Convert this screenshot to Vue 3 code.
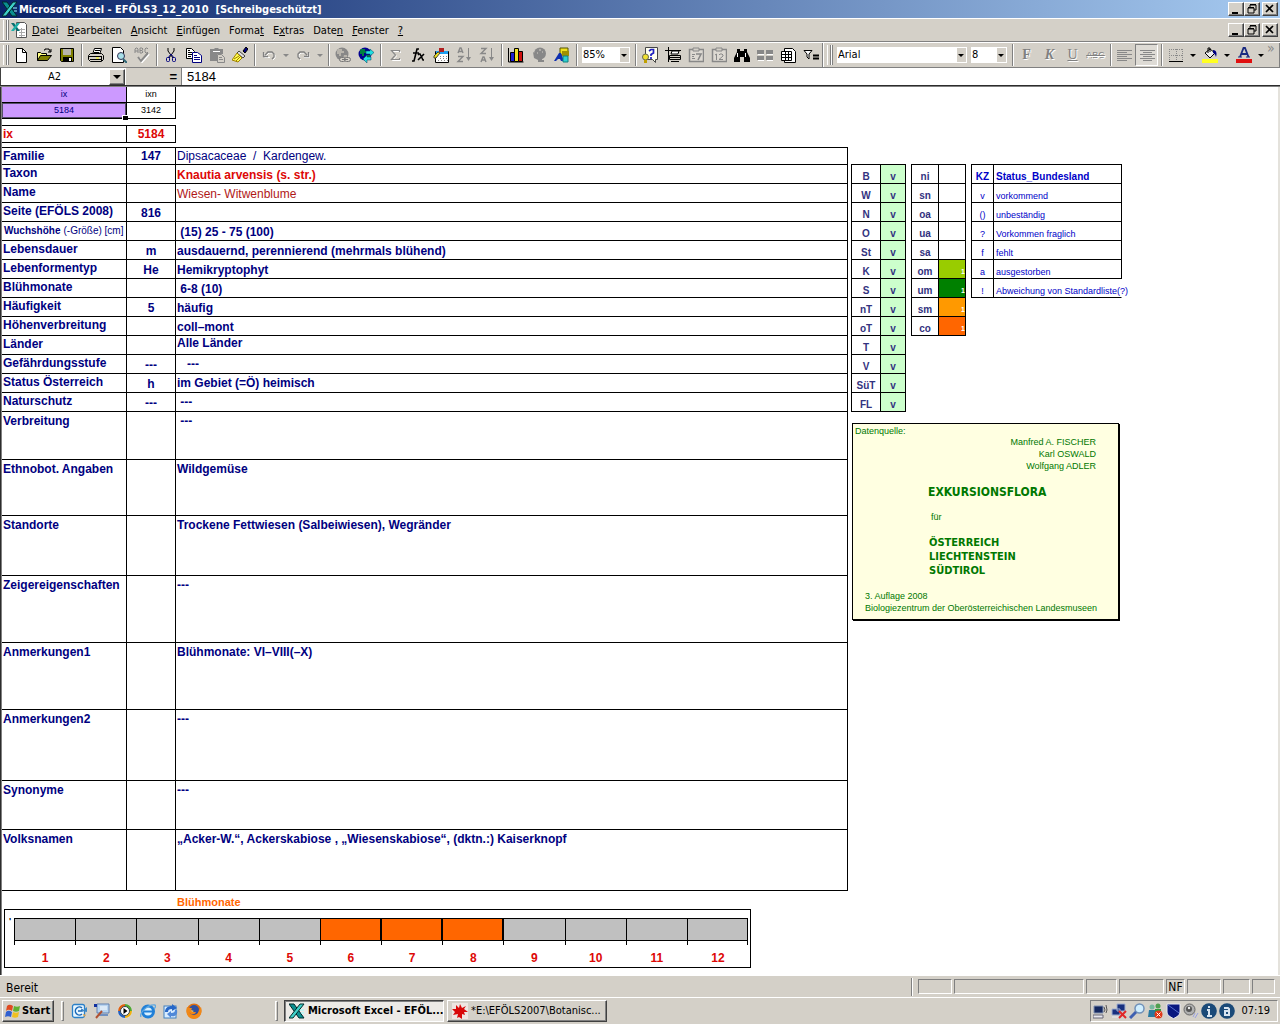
<script setup>
import { ref } from 'vue'

const menus = [
  ['', 'D', 'atei'], ['', 'B', 'earbeiten'], ['', 'A', 'nsicht'], ['', 'E', 'infügen'],
  ['Forma', 't', ''], ['E', 'x', 'tras'], ['Date', 'n', ''], ['', 'F', 'enster'], ['', '?', ''],
]

const standardGroups = [
  ['new', 'open', 'save'],
  ['print', 'preview', 'spell'],
  ['cut', 'copy', 'paste', 'brush'],
  ['undo', 'drop', 'redo', 'drop'],
  ['link', 'web'],
  ['sum', 'fx', 'pivot', 'az', 'za'],
  ['chart', 'map', 'draw'],
]
const extraGroup = ['help', 'printArea', 'cal7', 'cal12', 'find', 'split', 'sheet', 'filter']

const titles = {
  new: 'Neu', open: 'Öffnen', save: 'Speichern', print: 'Drucken', preview: 'Seitenansicht', spell: 'Rechtschreibung',
  cut: 'Ausschneiden', copy: 'Kopieren', paste: 'Einfügen', brush: 'Format übertragen', undo: 'Rückgängig',
  redo: 'Wiederholen', drop: 'Auswahl', link: 'Hyperlink', web: 'Web', sum: 'AutoSumme', fx: 'Funktion',
  pivot: 'PivotTable', az: 'Aufsteigend', za: 'Absteigend', chart: 'Diagramm', map: 'Karte', draw: 'Zeichnen',
  help: 'Hilfe', printArea: 'Druckbereich', cal7: 'Tag', cal12: 'Datum', find: 'Suchen', split: 'Teilen',
  sheet: 'Tabelle', filter: 'Filter', borders: 'Rahmen', fill: 'Füllfarbe', color: 'Schriftfarbe',
  alignLeft: 'Linksbündig', alignCenter: 'Zentriert',
}

const globe = (a, b) => `<circle cx="7" cy="7" r="6.500" fill="${a}"/><path d="M3 2h4v2h2v2H6v3H4V7H2V4zM9 8h3v2l-2 2H8z" fill="${b}"/>`
const icons = {
  new: '<path d="M3.500 1.500h6l4 4v10h-10z" fill="#fff" stroke="#000"/><path d="M9.500 1.500v4h4" fill="none" stroke="#000"/>',
  open: '<path d="M1.500 13.500v-8h3l1 1h5v3" fill="#ffff80" stroke="#000"/><path d="M1.500 13.500l3-5h11l-4 5z" fill="#808000" stroke="#000"/><path d="M8 3h1V2h4v1h1v2M12 5h3M15 2v3" fill="none" stroke="#000"/>',
  save: '<path d="M1.500 1.500h13v13h-12l-1-1z" fill="#808000" stroke="#000"/><path d="M4 2h8v6H4z" fill="#b8b4ac"/><path d="M4 10h9v4H4z" fill="#000"/><path d="M10 11h2v3h-2z" fill="#fff"/>',
  print: '<path d="M4.500 7.500l2-6h7l-2 6z" fill="#fff" stroke="#000"/><path d="M7 3.500h5M6 5.500h5" stroke="#000"/><path d="M.5 8.500l2-2h11l2 2v4l-2 2h-11l-2-2z" fill="#d4d0c8" stroke="#000"/><path d="M1 9.500h12M2 12.500h11M13.500 9v5" stroke="#000"/><path d="M8 10.500h3v1H8z" fill="#ff0"/>',
  preview: '<path d="M1.500 .5h8l3 3v12h-11z" fill="#fff" stroke="#000"/><circle cx="10" cy="9" r="3.500" fill="#a8e0e8" stroke="#335"/><path d="M12 12l4 4" stroke="#306878" stroke-width="2"/>',
  spell: '<g stroke="#fff" fill="none" transform="translate(1 1)"><path d="M4 10l3 4 7-8" stroke-width="2"/></g><g stroke="#888" fill="none"><path d="M1 6V2l1-1h1l1 1v4M1 4h3M6 1v5h2l1-1-1-1.500H6 8L9 2 8 1zM14 2l-1-1h-1l-1 1v3l1 1h1l1-1"/><path d="M4 10l3 4 7-8" stroke-width="2"/></g>',
  cut: '<path d="M5 1v3l5 7M11 1v3l-5 7" fill="none" stroke="#000"/><path d="M8 7l3 4M8 7l-3 4" stroke="#000080"/><rect x="3.500" y="10.500" width="3" height="4" rx="1" fill="none" stroke="#000080"/><rect x="9.500" y="10.500" width="3" height="4" rx="1" fill="none" stroke="#000080"/>',
  copy: '<path d="M.5 1.500h5l3 3v7h-8z" fill="#fff" stroke="#000"/><path d="M2 5.500h4M2 7.500h4M2 3.500h2M2 9.500h3" stroke="#000"/><path d="M6.500 5.500h5l4 3v7h-9z" fill="#fff" stroke="#000080"/><path d="M8 8.500h3M8 10.500h6M8 12.500h6" stroke="#000080"/>',
  paste: '<path d="M1 2h4l1-1h3l1 1h4v5H8v7H1z" fill="#888"/><path d="M4 4.500h7" stroke="#fff"/><path d="M8.500 7.500h4l3 3v5h-7z" fill="#d4d0c8" stroke="#888"/><path d="M10 10.500h3M10 12.500h4" stroke="#888"/>',
  brush: '<path d="M11 4l3-4 2 2-3 4z" fill="#000080" stroke="#000"/><path d="M7 4l6 5-2 2-6-5z" fill="#e0e0e0" stroke="#444"/><path d="M5 6l5 5-4 4-6-2z" fill="#ffff50" stroke="#a08000"/><path d="M2 12l5-3M4 14l4-4" stroke="#a08000"/>',
  undo: '<path d="M3 10V5M3 9.500h5M4 8l3-3h4l2 2v3l-2 2" stroke="#fff" fill="none" transform="translate(1 1)"/><path d="M2.500 10V5M2 9.500h5M4 8l3-3h4l2 2v3l-2 2" stroke="#808080" stroke-width="1.300" fill="none"/>',
  redo: '<path d="M13 10V5M13 9.500H8M12 8L9 5H5L3 7v3l2 2" stroke="#fff" fill="none" transform="translate(1 1)"/><path d="M13.500 10V5M14 9.500H9M12 8L9 5H5L3 7v3l2 2" stroke="#808080" stroke-width="1.300" fill="none"/>',
  link: globe('#888', '#b8b4ac') + '<rect x="4.500" y="10.500" width="6" height="4" rx="2" fill="#d4d0c8" stroke="#777"/><rect x="9.500" y="10.500" width="6" height="4" rx="2" fill="#d4d0c8" stroke="#777"/><path d="M7 12.500h6" stroke="#777"/>',
  web: globe('#000090', '#008040') + '<path d="M8 4h4V2l4 3.500L12 9V7H8z" fill="#20e0e0" stroke="#004060" stroke-width=".5"/><path d="M13 10H9V8l-4 4 4 4v-3h4z" fill="#20e0e0" stroke="#004060" stroke-width=".5"/>',
  sum: '<path d="M12.500 5V3.500h-8l4 4.500-4 4.500h8V11" fill="none" stroke="#fff" transform="translate(1 1)"/><path d="M12.500 5V3.500h-8l4 4.500-4 4.500h8V11" fill="none" stroke="#888" stroke-width="1.200"/>',
  fx: '<path d="M9 2H7L4 14H2M3 6h6M8 8l1-1h1l3 6h1M14 7l-6 6" fill="none" stroke="#000" stroke-width="1.600"/>',
  pivot: '<path d="M2.500 4.500h13v11h-13z" fill="#fff" stroke="#000"/><path d="M3 4h12v3H3z" fill="#20a0f0"/><path d="M7 9.500h8M7 11.500h8M5 13.500h10" stroke="#888" stroke-dasharray="1 2"/><path d="M6 1h5v4H6z" fill="#b02020"/><path d="M1 9l4-4 2 1-4 5H1z" fill="#f0e020" stroke="#443"/>',
  az: '<g fill="none" stroke="#888"><path d="M2 6l2-5h1l2 5M3 4.500h3M2 9.500h5l-5 5h5" stroke-width="1.400"/><path d="M12.500 1v11" stroke-width="1"/></g><path d="M10 10h5l-2.500 4z" fill="#888"/>',
  za: '<g fill="none" stroke="#888"><path d="M2 1.500h5l-5 5h5M2 15l2-5h1l2 5M3 13h3" stroke-width="1.400"/><path d="M12.500 1v11"/></g><path d="M10 10h5l-2.500 4z" fill="#888"/>',
  chart: '<path d="M.5 1v14h15" stroke="#000" fill="none"/><path d="M2.500 5.500h4v9h-4z" fill="#2020d0" stroke="#000"/><path d="M6.500 1.500h4v13h-4z" fill="#f0e020" stroke="#000"/><path d="M10.500 4.500h4v10h-4z" fill="#d01010" stroke="#000"/>',
  map: '<circle cx="9" cy="6.500" r="6" fill="#888"/><path d="M2 5l1 6 4 2v2h6v-2h-2v-2z" fill="#888"/><path d="M8 3h2M11 5h1M6 6h1" stroke="#d4d0c8"/>',
  draw: '<path d="M6 1h8v7H6z" fill="#f0e020" stroke="#555500"/><path d="M8 4h7v5H8z" fill="#a09000"/><path d="M0 14L5 6h2l3 8H7l-1-2H4l-2 2z" fill="#1030b0"/><path d="M9 9h5v6H9z" fill="#30d0d0" stroke="#108080"/>',
  help: '<path d="M3.500 .5h12v12h-2v3l-3-3h-7z" fill="#fffff0" stroke="#444"/><path d="M7 4l2-1.500h2.500V6L9 7.500V9M9 10v2" stroke="#2020c0" stroke-width="1.700" fill="none"/><circle cx="3.500" cy="10" r="3" fill="#f0e030" stroke="#665"/><path d="M2 13h3v3H2z" fill="#c0a000"/>',
  printArea: '<path d="M0 3.500h16M3.500 0v15" stroke="#000"/><path d="M6 7l1-3h7l-1 3z" fill="#fff" stroke="#000"/><path d="M4.500 8.500h11v4h-11z" fill="#d4d0c8" stroke="#000"/><path d="M5 10.500h10M6 14.500h8" stroke="#000"/>',
  cal7: '<path d="M1.500 2.500h14v12h-14z" fill="#ddd9d2" stroke="#888" stroke-width="1.500"/><path d="M5 1h6v3H5zM4 7.500h3M4 9.500h2M4 11.500h3" fill="#d4d0c8" stroke="#888"/><path d="M8 7h5l-3 6" fill="none" stroke="#888" stroke-width="1.600"/>',
  cal12: '<path d="M1.500 2.500h14v12h-14z" fill="#ddd9d2" stroke="#888" stroke-width="1.500"/><path d="M5 1h6v3H5z" fill="#d4d0c8" stroke="#888"/><path d="M4 8l1.500-1v6M8 8l1-1h2l1 1v1l-4 3.500h4" fill="none" stroke="#888"/>',
  find: '<path d="M3 2h3v2h4V2h3v3l3 6v4h-6v-5H6v5H0v-4l3-6z" fill="#000"/><path d="M3.500 6v4M11.500 6v4" stroke="#fff"/>',
  split: '<path d="M0 3h7v4H0zM9 3h7v4H9zM0 9h7v4H0zM9 9h7v4H9z" fill="#888"/><path d="M1 7.500h6M10 7.500h6M1 13.500h6M10 13.500h6" stroke="#fff"/>',
  sheet: '<path d="M4.500 1.500h8l3 3v11H4.500z" fill="#fff" stroke="#000"/><path d="M1.500 4.500h10v9h-10z" fill="#fff" stroke="#000"/><path d="M2 7.500h9M2 10.500h9M5.500 5v8M8.500 5v8" stroke="#000"/>',
  filter: '<path d="M1 3.500h8L6 7v5L4 10V7z" fill="#fff" stroke="#000"/><path d="M10 8.500h6M10 11.500h6" stroke="#000" stroke-width="2"/>',
  borders: '<path d="M1.500 2v12M8.500 2v12M14.500 2v12M1 2.500h14M1 8.500h14" stroke="#888" stroke-dasharray="1 1" fill="none"/><path d="M1 14.500h14" stroke="#000"/>',
  fill: '<path d="M3 6l5-4 5 4-5 5z" fill="#eee" stroke="#000"/><path d="M6 6V1h2v4" stroke="#000" fill="none"/><path d="M11 3c4 0 4 4 3 7-1-3-2-4-3-4z" fill="#000080"/><path d="M0 12h16v4H0z" fill="#ff2"/>',
  color: '<path d="M4 10L7.500 1h1.500l3.500 9M5 7h6" stroke="#1a2a80" stroke-width="1.800" fill="none"/><path d="M2 10h4M10 10h4" stroke="#1a2a80"/><path d="M0 12h16v4H0z" fill="#e01010"/>',
  alignLeft: '<path d="M1 3.500h15M1 5.500h10M1 7.500h15M1 9.500h10M1 11.500h15M1 13.500h10" stroke="#888"/>',
  alignCenter: '<path d="M1 3.500h15M4 5.500h9M1 7.500h15M4 9.500h9M1 11.500h15M4 13.500h9" stroke="#888"/>',
  excel: '<path d="M0 1h5l10 14h-5z" fill="#0a8f90" stroke="#002b2b"/><path d="M15 1h-4L0 15h4z" fill="#40d0c8" stroke="#002b2b"/><path d="M11 7h4M12 10h3" stroke="#9ff"/>',
  book: '<path d="M5.500 .5h8l2 2v13h-10z" fill="#fff" stroke="#555"/><path d="M8 7.500h6M8 10.500h6M8 13.500h6M10.500 6v9" stroke="#aaa"/><path d="M0 1h3l6 8H6z" fill="#0a6f70"/><path d="M9 1H6L0 9h3z" fill="#20b0a8"/>',
  windows: '<path d="M2 3c2-2 4-1 6 0L7 8C5 7 3 6 1 8z" fill="#e04a20"/><path d="M9 3c2 1 4 1 6 0l-1 5c-2 1-4 1-6 0z" fill="#60b030"/><path d="M1 9c2-2 4-1 6 0l-1 5c-2-1-4-1-6 0z" fill="#3060d0"/><path d="M8 9c2 1 4 1 6 0l-1 5c-2 1-4 1-6 0z" fill="#f0c020"/>',
  outlook: '<rect x="1.500" y="1.500" width="12" height="13" rx="2" fill="#e8f6ff" stroke="#2a80c8" stroke-width="1.300"/><path d="M11 5a4 4 0 1 0 0 6M7 8h4V6" fill="none" stroke="#1868b8" stroke-width="1.500"/><path d="M11 8l5-4v5z" fill="#3a88c8"/><path d="M12 11l3 1-2 2z" fill="#e0a040"/>',
  desktop: '<path d="M3 1h12v9H3z" fill="#b8d4f0" stroke="#6080b0"/><path d="M6 4h7M6 6h7" stroke="#fff"/><path d="M4 11h10v2H4z" fill="#7090c0"/><path d="M0 1h3v3H0z" fill="#1030a0"/><path d="M8 8l-6 7" stroke="#b05030" stroke-width="2"/>',
  media: '<circle cx="8" cy="8" r="7.500" fill="#e0e0e0"/><path d="M8 1a7 7 0 0 1 7 7h-4L8 5z" fill="#50a830"/><path d="M1 8a7 7 0 0 1 7-7v4L5 8z" fill="#e06010"/><path d="M1 8a7 7 0 0 0 7 7v-4L5 8z" fill="#2060c0"/><path d="M15 8a7 7 0 0 1-7 7v-4l3-3z" fill="#f0b010"/><circle cx="8" cy="8" r="4.500" fill="#fff" stroke="#345"/><path d="M6.500 5l4 3-4 3z" fill="#000"/>',
  ie: '<circle cx="8" cy="8.500" r="5.500" fill="#d8f0ff" stroke="#2080d8" stroke-width="3"/><path d="M4 8.500h9" stroke="#2080d8" stroke-width="2"/><path d="M1 14C-1 10 8 1 15 2c1 1 0 3-1 4" fill="none" stroke="#60a8e0" stroke-width="1.300"/>',
  sync: '<rect x="1" y="3" width="12" height="12" fill="#d8ecff" stroke="#4080c0"/><path d="M2 9c0-4 3-6 7-6V1l5 4-5 3V6C6 6 5 7 5 9z" fill="#2868c8"/><path d="M14 7c1 5-2 7-6 6v2l-4-4 4-3v2c3 0 4-1 4-3z" fill="#5088d8"/>',
  firefox: '<circle cx="8" cy="8" r="7.500" fill="#e07010"/><circle cx="8" cy="7" r="5" fill="#3050a0"/><path d="M1 4c2 1 3 1 5 1-1 2-1 3 1 4h3c-1 3-5 3-7 0 1 4 9 5 10-2l2-3c2 7-2 12-7 12C2 16-1 10 1 4z" fill="#f08818"/><path d="M5 7l3 1-2 1z" fill="#fbd060"/>',
  splat: '<path d="M0 0h16v16H0z" fill="#eee6e2"/><path d="M4 2l3 3 1-4 2 4 4-2-2 3 4 3h-4l1 3-3-1v5l-3-2-2 1 1-4-5 1 2-3-3-3h4z" fill="#d80808"/>',
  trayNet: '<path d="M1 3h9v7H1z" fill="#142860" stroke="#8090b0"/><path d="M0 12h10v3H0z" fill="#e8e8f0" stroke="#667"/><path d="M11 4l1 3-1 2M13 2l1 5-1 3" fill="none" stroke="#555"/>',
  trayOff: '<path d="M6 1h8v7H6zM1 6h8v6H1z" fill="#183080" stroke="#a0b0d0"/><path d="M1 13h8v2H1z" fill="#ddd"/><path d="M8 8l7 7M15 8l-7 7" stroke="#e02828" stroke-width="2"/>',
  trayFind: '<circle cx="10.500" cy="5.500" r="4.500" fill="#d0eeff" stroke="#7090b8" stroke-width="1.500"/><path d="M7 9l-6 6" stroke="#4060b0" stroke-width="3"/>',
  trayUsers: '<circle cx="5" cy="4" r="2.500" fill="#78b8a0"/><path d="M1 14l1-7h6l1 7z" fill="#2878a0"/><circle cx="11" cy="3" r="2.500" fill="#50a050"/><path d="M8 10V6h6v5z" fill="#30a040"/><circle cx="11.500" cy="11.500" r="4" fill="#e03818"/><path d="M9.500 9.500l4 4M13.500 9.500l-4 4" stroke="#fff"/>',
  trayShield: '<path d="M2 1h13v8c0 3-3 5-6.500 6.500C5 14 2 12 2 9z" fill="#0a1880" stroke="#e8e8f0"/><path d="M3 2l11 8" stroke="#5870d0"/>',
  traySound: '<circle cx="6.500" cy="6.500" r="5.500" fill="#b0b0b0" stroke="#666"/><circle cx="6" cy="6" r="3" fill="#555"/><circle cx="6" cy="5" r="1.200" fill="#eee"/><path d="M12 10l-2 4M15 10l-3 5" stroke="#98a0e0" fill="none"/>',
  trayInfo: '<circle cx="8" cy="8" r="7.800" fill="#1b4a78"/><path d="M8 3v2M6 7h2v6M6 13h5" stroke="#d8e4f0" stroke-width="2" fill="none"/>',
  trayA: '<circle cx="8" cy="8" r="7.800" fill="#1b4a78"/><path d="M5 5h4l1 1v7M10 8H6v4h4" stroke="#d8e4f0" stroke-width="2" fill="none"/>',
  min: '<path d="M3 10h6v2H3z" fill="#000"/>',
  restore: '<path d="M5 3h6v5H9M5 2.500h6M5 3v2M3 6h6v5H3zM3 5.500h6" fill="none" stroke="#000"/>',
  close: '<path d="M3 3l7 7M10 3l-7 7" stroke="#000" stroke-width="1.700"/>',
}

const rows = [
  { label: 'Familie', num: '147', value: 'Dipsacaceae  /  Kardengew.', h: 17, cls: 'plain' },
  { label: 'Taxon', num: '', value: 'Knautia arvensis (s. str.)', h: 19, cls: 'red' },
  { label: 'Name', num: '', value: 'Wiesen- Witwenblume', h: 19, cls: 'plain dark-red' },
  { label: 'Seite (EFÖLS 2008)', num: '816', value: '', h: 19 },
  { label: 'Wuchshöhe', note: '(-Größe) [cm]', num: '', value: ' (15) 25 - 75 (100)', h: 19 },
  { label: 'Lebensdauer', num: 'm', value: 'ausdauernd, perennierend (mehrmals blühend)', h: 19 },
  { label: 'Lebenformentyp', num: 'He', value: 'Hemikryptophyt', h: 19 },
  { label: 'Blühmonate', num: '', value: ' 6-8 (10)', h: 19 },
  { label: 'Häufigkeit', num: '5', value: 'häufig', h: 19 },
  { label: 'Höhenverbreitung', num: '', value: 'coll–mont', h: 19 },
  { label: 'Länder', num: '', value: 'Alle Länder', h: 19, cls: 'top' },
  { label: 'Gefährdungsstufe', num: '---', value: '   ---', h: 19, cls: 'mid' },
  { label: 'Status Österreich', num: 'h', value: 'im Gebiet (=Ö) heimisch', h: 19, cls: 'mid' },
  { label: 'Naturschutz', num: '---', value: ' ---', h: 19, cls: 'mid' },
  { label: 'Verbreitung', num: '', value: ' ---', h: 48, cls: 'top' },
  { label: 'Ethnobot. Angaben', num: '', value: 'Wildgemüse', h: 56, cls: 'top' },
  { label: 'Standorte', num: '', value: 'Trockene Fettwiesen (Salbeiwiesen), Wegränder', h: 60, cls: 'top' },
  { label: 'Zeigereigenschaften', num: '', value: '---', h: 67, cls: 'top' },
  { label: 'Anmerkungen1', num: '', value: 'Blühmonate: VI–VIII(–X)', h: 67, cls: 'top' },
  { label: 'Anmerkungen2', num: '', value: '---', h: 71, cls: 'top' },
  { label: 'Synonyme', num: '', value: '---', h: 49, cls: 'top' },
  { label: 'Volksnamen', num: '', value: '„Acker-W.“, Ackerskabiose , „Wiesenskabiose“, (dktn.:) Kaiserknopf', h: 61, cls: 'top' },
]

const states = ['B', 'W', 'N', 'O', 'St', 'K', 'S', 'nT', 'oT', 'T', 'V', 'SüT', 'FL']
const zones = [
  ['ni'], ['sn'], ['oa'], ['ua'], ['sa'],
  ['om', '#99cc00'], ['um', '#008000'], ['sm', '#ff9900'], ['co', '#ff6600'],
]
const legend = [
  ['v', 'vorkommend'], ['()', 'unbeständig'], ['?', 'Vorkommen fraglich'],
  ['f', 'fehlt'], ['a', 'ausgestorben'], ['!', 'Abweichung von Standardliste(?)'],
]
const panes = [34, 130, 31, 45, 19, 34, 27, 23]
const quick = ['outlook', 'desktop', 'media', 'ie', 'sync', 'firefox']
const tray = ['trayNet', 'trayOff', 'trayFind', 'trayUsers', 'trayShield', 'traySound', 'trayInfo', 'trayA']
const blooming = [6, 7, 8]

const cellName = ref('A2')
const formula = ref('5184')
</script>

<template>
  <div class="app">
    <header class="titlebar">
      <svg class="ico" viewBox="0 0 16 16" v-html="icons.excel"></svg>
      <h1>Microsoft Excel - EFÖLS3_12_2010&nbsp; [Schreibgeschützt]</h1>
      <div class="winbtns">
        <button v-for="b in ['min', 'restore', 'close']" :key="b" type="button" :class="b" :aria-label="b">
          <svg viewBox="0 0 14 14" v-html="icons[b]"></svg>
        </button>
      </div>
    </header>

    <nav class="menubar">
      <span class="grip"></span>
      <svg class="ico book" viewBox="0 0 16 16" v-html="icons.book"></svg>
      <button v-for="m in menus" :key="m.join('')" type="button" class="menu">{{ m[0] }}<u>{{ m[1] }}</u>{{ m[2] }}</button>
      <div class="winbtns">
        <button v-for="b in ['min', 'restore', 'close']" :key="b" type="button" :class="b" :aria-label="b">
          <svg viewBox="0 0 14 14" v-html="icons[b]"></svg>
        </button>
      </div>
    </nav>

    <div class="toolbars">
      <div class="toolbar">
        <span class="grip"></span>
        <template v-for="(g, gi) in standardGroups" :key="gi">
          <template v-for="(name, i) in g" :key="i">
            <button v-if="name === 'drop'" type="button" class="drop gray" :aria-label="titles.drop"></button>
            <button v-else type="button" class="tool" :aria-label="titles[name]">
              <svg class="ico" viewBox="0 0 16 16" v-html="icons[name]"></svg>
            </button>
          </template>
          <span class="sep"></span>
        </template>
        <label class="combo zoom"><select aria-label="Zoom"><option>85%</option></select></label>
        <span class="sep"></span>
        <button v-for="name in extraGroup" :key="name" type="button" class="tool" :aria-label="titles[name]">
          <svg class="ico" viewBox="0 0 16 16" v-html="icons[name]"></svg>
        </button>
      </div>
      <div class="toolbar format">
        <span class="grip"></span>
        <label class="combo font"><select aria-label="Schriftart"><option>Arial</option></select></label>
        <label class="combo size"><select aria-label="Schriftgrad"><option>8</option></select></label>
        <span class="sep"></span>
        <button type="button" class="tool letter"><b>F</b></button>
        <button type="button" class="tool letter"><i>K</i></button>
        <button type="button" class="tool letter"><u>U</u></button>
        <button type="button" class="tool letter small"><s>ABC</s></button>
        <span class="sep narrow"></span>
        <button type="button" class="tool" :aria-label="titles.alignLeft"><svg class="ico" viewBox="0 0 16 16" v-html="icons.alignLeft"></svg></button>
        <button type="button" class="tool pressed" :aria-label="titles.alignCenter"><svg class="ico" viewBox="0 0 16 16" v-html="icons.alignCenter"></svg></button>
        <span class="sep"></span>
        <template v-for="name in ['borders', 'fill', 'color']" :key="name">
          <button type="button" class="tool" :aria-label="titles[name]"><svg class="ico" viewBox="0 0 16 16" v-html="icons[name]"></svg></button>
          <button type="button" class="drop" :aria-label="titles.drop"></button>
        </template>
        <span class="more">»</span>
      </div>
    </div>

    <div class="formulabar">
      <div class="namebox">
        <input v-model="cellName" aria-label="Namenfeld">
        <button type="button" aria-label="Namen auswählen"></button>
      </div>
      <span class="equals">=</span>
      <input v-model="formula" class="formula" aria-label="Bearbeitungsleiste">
    </div>

    <main class="sheet">
      <section class="record">
        <table class="grid index">
          <tbody>
            <tr><td class="key">ix</td><td class="num">ixn</td></tr>
            <tr><td class="key selected">5184</td><td class="num">3142</td></tr>
          </tbody>
        </table>
        <table class="grid ixrow">
          <tbody><tr><th class="key" scope="row">ix</th><td class="num">5184</td></tr></tbody>
        </table>
        <table class="grid data">
          <tbody>
            <tr v-for="r in rows" :key="r.label" :class="{ tall: r.h > 19 }" :style="{ height: r.h + 'px' }">
              <th class="key" :class="{ noted: r.note }" scope="row">{{ r.label }}<small v-if="r.note">{{ r.note }}</small></th>
              <td class="num">{{ r.num }}</td>
              <td class="val" :class="r.cls">{{ r.value }}</td>
            </tr>
          </tbody>
        </table>
        <h2>Blühmonate</h2>
        <div class="chart">
          <span class="mark">'</span>
          <ol>
            <li v-for="m in 12" :key="m" :class="{ on: blooming.includes(m) }"><i></i><span>{{ m }}</span></li>
          </ol>
        </div>
      </section>

      <aside class="side">
        <div class="tables">
          <table class="grid states">
            <tbody><tr v-for="s in states" :key="s"><th scope="row">{{ s }}</th><td>v</td></tr></tbody>
          </table>
          <table class="grid zones">
            <tbody>
              <tr v-for="z in zones" :key="z[0]">
                <th scope="row">{{ z[0] }}</th>
                <td :style="{ background: z[1] }">{{ z[1] ? '1' : '' }}</td>
              </tr>
            </tbody>
          </table>
          <table class="grid legend">
            <thead><tr><th scope="col">KZ</th><th scope="col">Status_Bundesland</th></tr></thead>
            <tbody><tr v-for="l in legend" :key="l[0]"><td>{{ l[0] }}</td><td>{{ l[1] }}</td></tr></tbody>
          </table>
        </div>
        <div class="source">
          <p>Datenquelle:</p>
          <p class="authors">Manfred A. FISCHER<br>Karl OSWALD<br>Wolfgang ADLER</p>
          <h3>EXKURSIONSFLORA</h3>
          <p class="for">für</p>
          <h4>ÖSTERREICH<br>LIECHTENSTEIN<br>SÜDTIROL</h4>
          <p class="edition">3. Auflage 2008<br>Biologiezentrum der Oberösterreichischen Landesmuseen</p>
        </div>
      </aside>
    </main>

    <div class="statusbar">
      <span class="ready">Bereit</span>
      <span class="divider"></span>
      <span v-for="(w, i) in panes" :key="i" class="pane" :style="{ width: w + 'px' }">{{ i === 4 ? 'NF' : '' }}</span>
    </div>

    <footer class="taskbar">
      <button type="button" class="start"><svg class="ico" viewBox="0 0 16 16" v-html="icons.windows"></svg>Start</button>
      <span class="bar"></span>
      <div class="quick">
        <button v-for="q in quick" :key="q" type="button" :aria-label="q"><svg class="ico" viewBox="0 0 16 16" v-html="icons[q]"></svg></button>
      </div>
      <span class="bar"></span>
      <button type="button" class="task active"><svg class="ico" viewBox="0 0 16 16" v-html="icons.excel"></svg>Microsoft Excel - EFÖL...</button>
      <button type="button" class="task"><svg class="ico" viewBox="0 0 16 16" v-html="icons.splat"></svg>*E:\EFÖLS2007\Botanisc...</button>
      <div class="tray">
        <svg v-for="t in tray" :key="t" class="ico" viewBox="0 0 16 16" v-html="icons[t]"></svg>
        <time>07:19</time>
      </div>
    </footer>
  </div>
</template>

<style>
body { margin: 0; background: #fff; }
</style>

<style scoped>
* { box-sizing: border-box; }
.app {
  display: flex; flex-direction: column; min-height: 100vh;
  font: 11px/14px "DejaVu Sans Condensed", "DejaVu Sans", sans-serif; color: #000; background: #d4d0c8;
}
button, input, select { font: inherit; color: inherit; margin: 0; padding: 0; border: 0; border-radius: 0; background: none; }
h1, h2, h3, h4, p, ol { margin: 0; padding: 0; }
.ico { width: 16px; height: 16px; flex: none; display: block; }

.titlebar { display: flex; align-items: center; height: 18px; padding: 0 2px; background: linear-gradient(90deg, #0a246a, #a6caf0); color: #fff; }
.titlebar h1 { flex: 1; padding: 1px 0 0 1px; font-size: 11px; font-weight: bold; white-space: nowrap; }
.winbtns { display: flex; margin-left: auto; }
.winbtns button { width: 16px; height: 14px; background: #d4d0c8; border: 1px solid; border-color: #fff #404040 #404040 #fff; box-shadow: inset -1px -1px #808080; }
.winbtns .close { margin-left: 2px; }
.winbtns svg { width: 14px; height: 14px; display: block; margin-top: -1px; }

.menubar { display: flex; align-items: center; height: 24px; padding: 0 2px 0 3px; border-top: 1px solid #fff; border-bottom: 1px solid #808080; }
.menubar .book { margin: 0 0 0 3px; }
.menu { padding: 2px 4px 0 5px; white-space: nowrap; }
.grip { flex: none; width: 5px; height: 20px; border: solid #fff; border-width: 0 1px 0 1px; box-shadow: inset -1px 0 #808080, 1px 0 #808080; }

.toolbars { display: flex; height: 26px; border-top: 1px solid #fff; border-bottom: 1px solid #808080; }
.toolbar { display: flex; align-items: center; padding-left: 3px; border-right: 1px solid #808080; }
.toolbar .grip { margin-right: 1px; }
.toolbar.format { flex: 1; border-left: 1px solid #fff; }
.toolbar.format .grip { margin-right: 5px; }
.tool { flex: none; display: flex; align-items: center; justify-content: center; width: 23px; height: 22px; }
.tool.pressed { border: 1px solid; border-color: #808080 #fff #fff #808080; background: #dedbd5; }
.sep { flex: none; width: 6px; height: 22px; background: linear-gradient(90deg, transparent 3px, #808080 3px 4px, #fff 4px 5px, transparent 5px); }
.sep.narrow { width: 5px; }
.drop { flex: none; width: 11px; height: 22px; display: flex; align-items: center; justify-content: center; }
.drop::after, .combo::after, .namebox button::after { content: ""; border: solid transparent; border-width: 3px 3px 0; border-top-color: #000; }
.drop.gray::after { border-top-color: #888; }
.combo { position: relative; flex: none; height: 16px; background: #fff; }
.combo select { width: 100%; height: 16px; padding-left: 1px; line-height: 16px; appearance: none; outline: 0; }
.combo::before { content: ""; position: absolute; right: 1px; top: 1px; width: 9px; height: 14px; background: #d4d0c8; pointer-events: none; }
.combo::after { position: absolute; right: 3px; top: 7px; pointer-events: none; }
.zoom { width: 48px; margin: 0 2px 0 3px; }
.font { width: 130px; margin-right: 4px; }
.size { width: 36px; margin-right: 2px; }
.letter { font: 14px/16px "Liberation Serif", serif; color: #808080; text-shadow: 1px 1px #fff; }
.letter i { font-weight: bold; }
.letter.small { font: 9px/16px "Liberation Sans", sans-serif; }
.more { margin: -14px 0 0 1px; color: #888; font-size: 14px; }

.formulabar { display: flex; height: 19px; background: #fff; border-bottom: 2px groove #808080; }
.namebox { display: flex; width: 126px; border-left: 1px solid #404040; }
.namebox input { flex: 1; width: 0; text-align: center; }
.namebox button { width: 16px; height: 16px; margin: 1px; background: #d4d0c8; border: 1px solid; border-color: #fff #404040 #404040 #fff; display: flex; align-items: center; justify-content: center; box-shadow: inset -1px -1px #808080; }
.namebox button::after { border-width: 4px 4px 0; }
.equals { width: 56px; padding-right: 4px; background: #d4d0c8; border-right: 1px solid #808080; text-align: right; font: bold 13px/17px "Liberation Sans", sans-serif; }
.formula { flex: 1; padding-left: 5px; font: 13px/17px "Liberation Sans", sans-serif; }

.sheet {
  flex: 1; display: flex; padding-bottom: 7px; background: #fff; border-left: 2px groove #808080; border-right: 2px solid #e4e2dc;
  font: bold 12px/15px "Liberation Sans", Arial, sans-serif; color: #000080;
}
.record { flex: 1; min-width: 0; }
.grid { border-collapse: separate; border-spacing: 0; table-layout: fixed; }
.grid td, .grid th { padding: 0; border: solid #000; border-width: 0 1px 1px 0; overflow: hidden; }
.key { width: 125px; text-align: left; vertical-align: top; }
.num { width: 49px; text-align: center; vertical-align: bottom; }
.grid.index { width: 174px; font: 9px/15px "Liberation Sans", Arial, sans-serif; }
.index tr { height: 16px; }
.index td.key { position: relative; text-align: center; background: #cc99ff; overflow: visible; }
.index .num { color: #000; }
.index .selected { box-shadow: inset 0 0 0 1px #56506a; }
.index .selected::after { content: ""; position: absolute; right: -2px; bottom: -2px; width: 5px; height: 4px; background: #000; border: solid #fff; border-width: 1px 0 0 1px; }
.grid.ixrow { width: 174px; margin-top: 6px; border-top: 1px solid #000; color: #dd0806; line-height: 16px; }
.grid.ixrow .key { padding-left: 1px; }
.grid.data { width: 100%; margin-top: 4px; border-top: 1px solid #000; }
.grid.data .key { padding: 1px 0 0 1px; white-space: nowrap; }
.grid.data .key.noted { padding-left: 2px; font-size: 10px; }
.key small { margin-left: 3px; font-size: 10px; font-weight: normal; }
.grid.data .val { padding-left: 1px; vertical-align: bottom; white-space: pre; }
.grid.data .val.top { vertical-align: top; }
.grid.data .val.mid { vertical-align: middle; }
.grid.data .tall .key, .grid.data .tall .val { padding-top: 2px; }
.val.plain { font-weight: normal; }
.val.red { color: #dd0806; }
.val.dark-red { color: #b01818; }
h2 { margin: 5px 0 0 175px; font-size: 11px; line-height: 13px; color: #ff6600; }
.chart { display: flex; height: 59px; margin: 0 97px 0 2px; border: 1px solid #000; }
.mark { width: 9px; padding: 4px 0 0 4px; color: #000; font-size: 9px; }
.chart ol { flex: 1; display: flex; margin: 8px 2px 0 0; list-style: none; }
.chart li { position: relative; flex: 1; text-align: center; color: #dd0806; }
.chart i { display: block; height: 23px; border: solid #000; border-width: 1px 0 1px 1px; background: #c0c0c0; }
.chart li::before { content: ""; position: absolute; left: 0; top: 0; height: 27px; border-left: 1px solid #000; }
.chart li:last-child::after { content: ""; position: absolute; right: 0; top: 0; height: 27px; border-left: 1px solid #000; }
.chart .on i { background: #ff6600; border-right-width: 1px; }
.chart li span { display: block; padding: 10px 0 0 1px; }

.side { flex: 0 0 430px; padding-top: 77px; font-size: 10px; line-height: 12px; }
.tables { display: flex; align-items: flex-start; gap: 5px; margin-left: 3px; }
.tables .grid { border: solid #000; border-width: 1px 0 0 1px; text-align: center; color: #333380; }
.tables tr { height: 19px; }
.tables td, .tables th { vertical-align: bottom; }
.states { width: 55px; }
.states th { width: 29px; }
.states td { background: #ccffcc; }
.zones { width: 55px; }
.zones th { width: 27px; }
.zones td { font-size: 7px; color: #fff; text-align: right; }
.tables .legend { width: 151px; color: #0000c8; }
.legend th:first-child, .legend td:first-child { width: 22px; }
.legend td { font-size: 9px; font-weight: normal; }
.legend th:last-child, .legend td:last-child { padding-left: 2px; text-align: left; white-space: nowrap; }
.legend tr:last-child td:last-child { overflow: visible; border-right-color: transparent; }

.source { width: 267px; margin: 11px 0 0 4px; padding: 1px 2px 5px; background: #ffffe1; border: 1px solid #000; box-shadow: 1px 1px #000; color: #007800; font: 9px/12px "Liberation Sans", Arial, sans-serif; }
.authors { margin: -1px 20px 0 0; text-align: right; }
.source h3, .source h4 { font: bold 12px/14px "DejaVu Sans Condensed", sans-serif; }
.source h3 { margin: 13px 0 0 73px; }
.for { margin: 12px 0 0 76px; }
.source h4 { margin: 13px 0 0 74px; font-size: 11px; }
.edition { margin: 12px 0 0 10px; white-space: nowrap; }

.statusbar { display: flex; align-items: center; height: 22px; padding: 0 5px 0 6px; border-top: 1px solid #fff; font-size: 12px; }
.ready { flex: 1; padding-top: 2px; }
.divider { width: 2px; height: 18px; margin-right: 3px; border-left: 1px solid #808080; border-right: 1px solid #fff; }
.pane { height: 15px; margin-left: 2px; line-height: 14px; border: 1px solid; border-color: #808080 #fff #fff #808080; text-align: center; overflow: hidden; }

.taskbar { display: flex; align-items: center; height: 27px; padding: 0 2px; border-top: 1px solid #fff; }
.start, .task { display: flex; align-items: center; gap: 3px; height: 22px; padding: 0 2px; border: 1px solid; border-color: #fff #404040 #404040 #fff; box-shadow: inset -1px -1px #808080; white-space: nowrap; overflow: hidden; }
.start { width: 52px; gap: 1px; font-weight: bold; }
.bar { width: 3px; height: 20px; border: 1px solid; border-color: #fff #808080 #808080 #fff; margin: 0 7px; }
.quick { display: flex; gap: 7px; width: 197px; }
.quick button { width: 16px; height: 16px; }
.bar + .task { margin-left: -1px; }
.task { width: 160px; padding-left: 4px; margin-right: 3px; }
.task.active { border-color: #404040 #fff #fff #404040; box-shadow: inset 1px 1px #808080; background: #eceae6; font-weight: bold; }
.tray { display: flex; align-items: center; gap: 2px; height: 22px; margin-left: auto; padding: 0 7px 0 2px; border: 1px solid; border-color: #808080 #fff #fff #808080; }
.tray time { padding-left: 4px; }
</style>
